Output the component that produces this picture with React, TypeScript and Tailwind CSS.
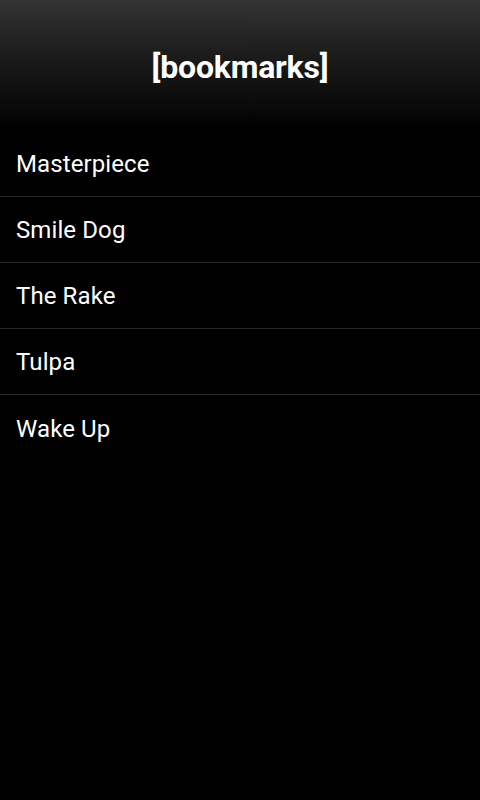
const items = ["Masterpiece", "Smile Dog", "The Rake", "Tulpa", "Wake Up"];

export default function App() {
  return (
    <div className="min-h-[800px] w-full bg-black font-['Roboto',sans-serif] text-white">
      {/* Title bar */}
      <header className="flex h-[131px] items-center justify-center bg-[linear-gradient(to_bottom,#343434,#1a1a1a_45%,#0a0a0a_80%,#000)] pt-[2px]">
        <h1 className="text-[32px] font-bold leading-none tracking-[-0.2px]">[bookmarks]</h1>
      </header>

      {/* Bookmark list */}
      <ul>
        {items.map((name, i) => (
          <li
            key={name}
            className={
              i < items.length - 1
                ? "flex h-[66px] items-center border-b border-[#2a2a2a] px-4 pt-[1px] text-[24px] tracking-[0.1px]"
                : "flex h-[66px] items-center px-4 pt-[1px] text-[24px] tracking-[0.1px]"
            }
          >
            {name}
          </li>
        ))}
      </ul>
    </div>
  );
}
